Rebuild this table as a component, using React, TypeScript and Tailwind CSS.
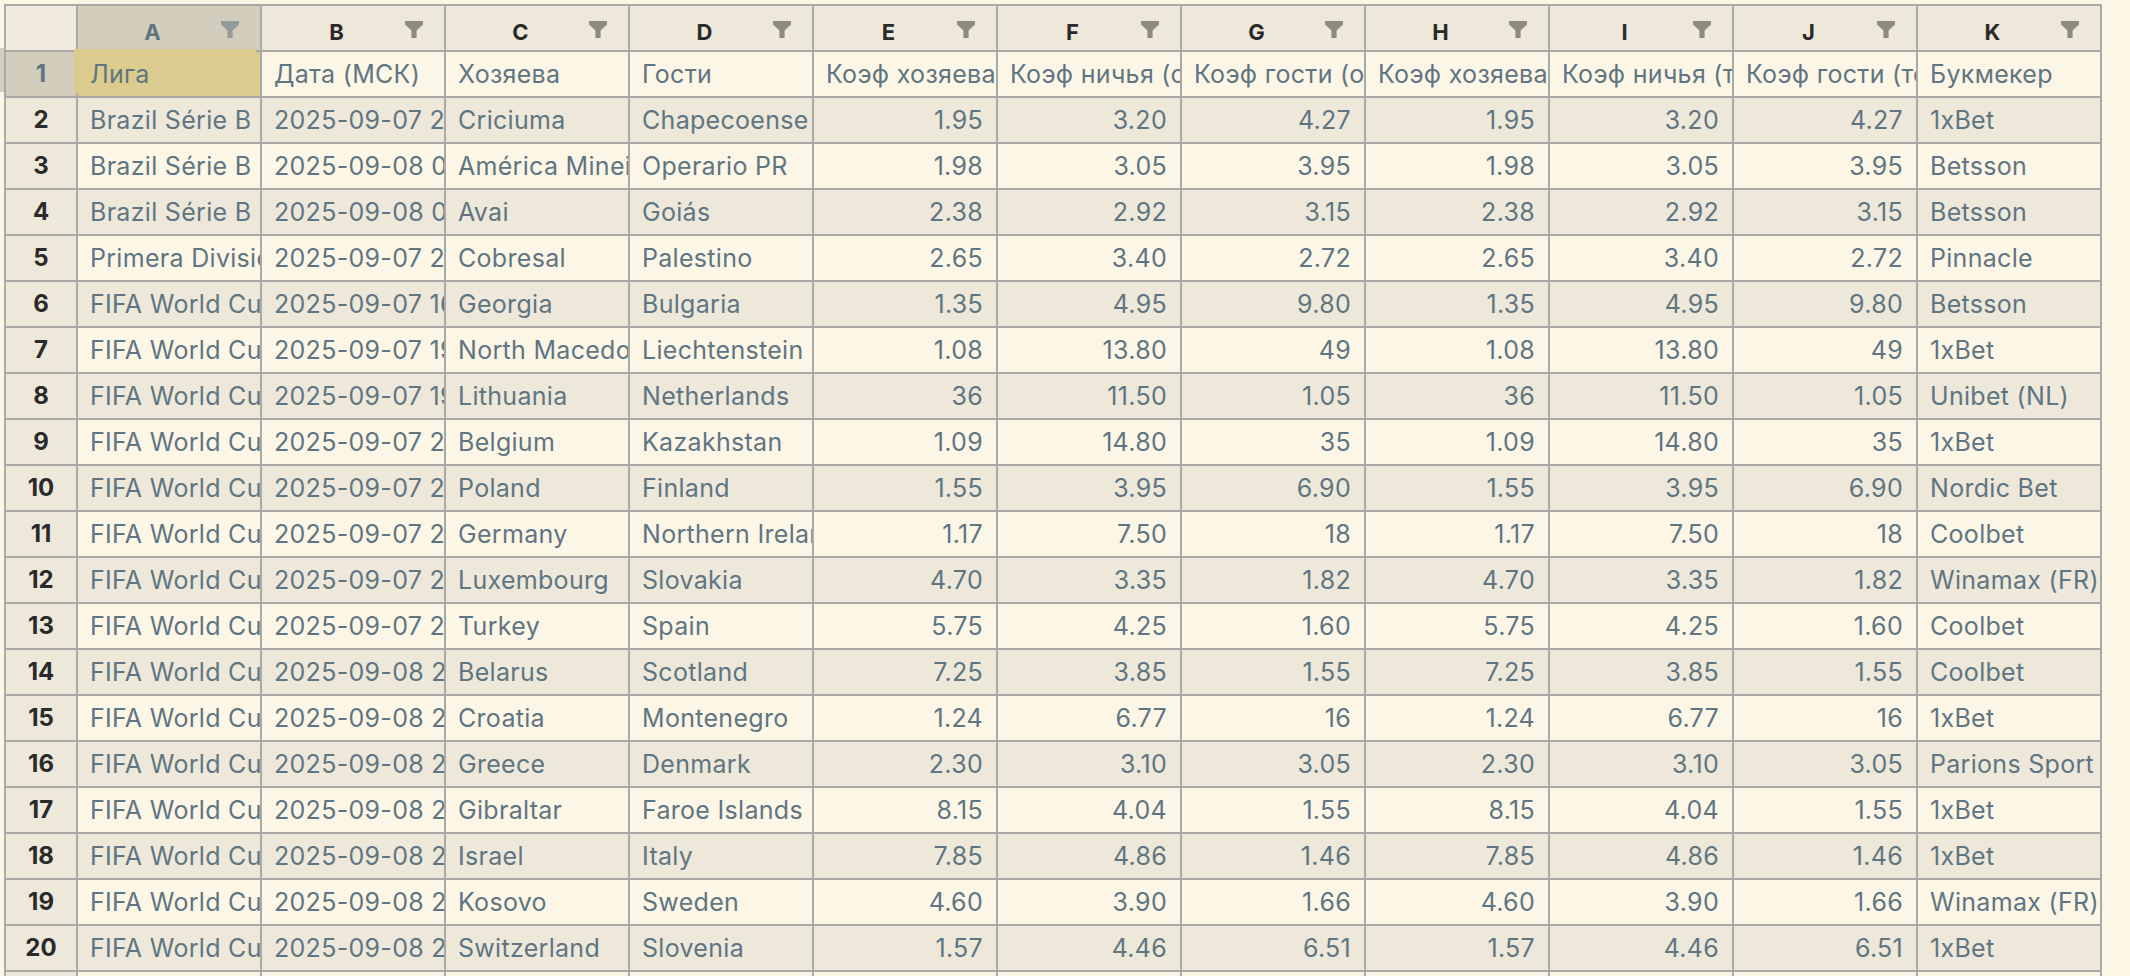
import React from "react";

const LETTERS = ["A", "B", "C", "D", "E", "F", "G", "H", "I", "J", "K"];

const HEADER = [
  "Лига",
  "Дата (МСК)",
  "Хозяева",
  "Гости",
  "Коэф хозяева (открытие)",
  "Коэф ничья (открытие)",
  "Коэф гости (открытие)",
  "Коэф хозяева (текущий)",
  "Коэф ничья (текущий)",
  "Коэф гости (текущий)",
  "Букмекер",
];

type Row = [string, string, string, string, string, string, string, string];

const WC = "FIFA World Cup Qualification, UEFA";

const ROWS: Row[] = [
  ["Brazil Série B", "2025-09-07 21:30", "Criciuma", "Chapecoense", "1.95", "3.20", "4.27", "1xBet"],
  ["Brazil Série B", "2025-09-08 00:00", "América Mineiro", "Operario PR", "1.98", "3.05", "3.95", "Betsson"],
  ["Brazil Série B", "2025-09-08 02:30", "Avai", "Goiás", "2.38", "2.92", "3.15", "Betsson"],
  ["Primera Division", "2025-09-07 23:00", "Cobresal", "Palestino", "2.65", "3.40", "2.72", "Pinnacle"],
  [WC, "2025-09-07 16:00", "Georgia", "Bulgaria", "1.35", "4.95", "9.80", "Betsson"],
  [WC, "2025-09-07 19:00", "North Macedonia", "Liechtenstein", "1.08", "13.80", "49", "1xBet"],
  [WC, "2025-09-07 19:00", "Lithuania", "Netherlands", "36", "11.50", "1.05", "Unibet (NL)"],
  [WC, "2025-09-07 21:45", "Belgium", "Kazakhstan", "1.09", "14.80", "35", "1xBet"],
  [WC, "2025-09-07 21:45", "Poland", "Finland", "1.55", "3.95", "6.90", "Nordic Bet"],
  [WC, "2025-09-07 21:45", "Germany", "Northern Ireland", "1.17", "7.50", "18", "Coolbet"],
  [WC, "2025-09-07 21:45", "Luxembourg", "Slovakia", "4.70", "3.35", "1.82", "Winamax (FR)"],
  [WC, "2025-09-07 21:45", "Turkey", "Spain", "5.75", "4.25", "1.60", "Coolbet"],
  [WC, "2025-09-08 21:45", "Belarus", "Scotland", "7.25", "3.85", "1.55", "Coolbet"],
  [WC, "2025-09-08 21:45", "Croatia", "Montenegro", "1.24", "6.77", "16", "1xBet"],
  [WC, "2025-09-08 21:45", "Greece", "Denmark", "2.30", "3.10", "3.05", "Parions Sport"],
  [WC, "2025-09-08 21:45", "Gibraltar", "Faroe Islands", "8.15", "4.04", "1.55", "1xBet"],
  [WC, "2025-09-08 21:45", "Israel", "Italy", "7.85", "4.86", "1.46", "1xBet"],
  [WC, "2025-09-08 21:45", "Kosovo", "Sweden", "4.60", "3.90", "1.66", "Winamax (FR)"],
  [WC, "2025-09-08 21:45", "Switzerland", "Slovenia", "1.57", "4.46", "6.51", "1xBet"],
  [WC, "2025-09-09 21:45", "Austria", "Cyprus", "1.12", "9.40", "21", "1xBet"],
];

function Funnel({ color }: { color: string }) {
  return (
    <svg width="18" height="17" viewBox="0 0 18 17" className="shrink-0">
      <path d="M0 0H18V3.5L11.6 9.5V17H6.4V9.5L0 3.5Z" fill={color} />
    </svg>
  );
}

function ColHeader({ letter, selected }: { letter: string; selected: boolean }) {
  return (
    <div
      className={`h-[44px] flex items-center pt-[8px] pl-[6px] pr-[21px] ${
        selected ? "bg-[#d3cdbd]" : "bg-[#ede8da]"
      }`}
    >
      <span
        className={`flex-1 text-center text-[22px] font-bold leading-none ${
          selected ? "text-[#5f7581]" : "text-[#2a2a2a]"
        }`}
      >
        {letter}
      </span>
      <div className="-mt-[6px]">
        <Funnel color={selected ? "#939c9b" : "#8e8a80"} />
      </div>
    </div>
  );
}

function Cell({
  text,
  right,
  bg,
}: {
  text: string;
  right?: boolean;
  bg: string;
}) {
  return (
    <div
      className={`h-[44px] flex items-center overflow-hidden whitespace-nowrap text-[25px] leading-none tracking-[0.3px] text-[#5f7581] ${
        right ? "justify-end pr-[13px] pl-[4px]" : "pl-[12px]"
      } ${bg}`}
    >
      <span>{text}</span>
    </div>
  );
}

export default function App() {
  const cream = "bg-[#fcf6e6]";
  const beige = "bg-[#ede8da]";
  return (
    <div className="h-screen w-screen overflow-hidden bg-[#fcf6e6] flex pt-[4px] font-[Inter,sans-serif]">
      <div className="w-[4px] shrink-0 flex flex-col">
        <div className="h-[44px]" />
        <div className="h-[44px] bg-[#d3cdbd]" />
      </div>
      <div className="grid grid-cols-[70px_repeat(11,182px)] auto-rows-[44px] gap-[2px] bg-[#a9a9a7] p-[2px] w-max self-start">
        <div className="h-[44px] bg-[#f0ebde]" />
        {LETTERS.map((l, i) => (
          <ColHeader key={l} letter={l} selected={i === 0} />
        ))}

        <div className="h-[44px] flex items-center justify-center bg-[#d3cdbd] text-[24px] font-bold text-[#5f7581] leading-none">
          1
        </div>
        {HEADER.map((h, i) => (
          <Cell
            key={h}
            text={h}
            bg={i === 0 ? "bg-[#dccb8f] relative shadow-[-4px_-3px_0_0_#dccb8f]" : cream}
          />
        ))}

        {ROWS.map((r, idx) => {
          const n = idx + 2;
          const bg = n % 2 === 0 ? beige : cream;
          const [league, date, home, away, h, d, a, book] = r;
          const vals = [league, date, home, away, h, d, a, h, d, a, book];
          return (
            <React.Fragment key={n}>
              <div className="h-[44px] flex items-center justify-center bg-[#ede8da] text-[24px] font-bold text-[#2a2a2a] leading-none">
                {n}
              </div>
              {vals.map((v, ci) => (
                <Cell key={ci} text={v} right={ci >= 4 && ci <= 9} bg={bg} />
              ))}
            </React.Fragment>
          );
        })}
      </div>
    </div>
  );
}
